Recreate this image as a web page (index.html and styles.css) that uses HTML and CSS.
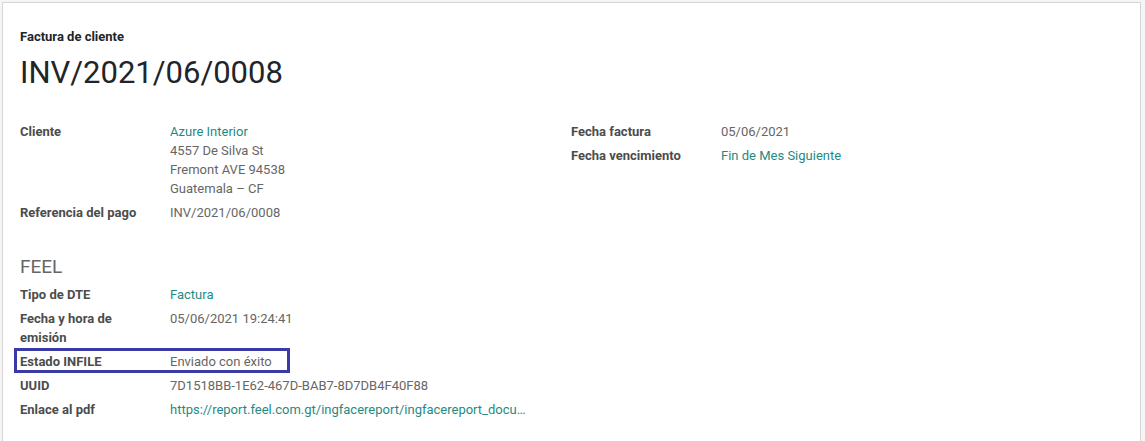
FILE: index.html
```html
<!DOCTYPE html>
<html lang="es">
<head>
<meta charset="utf-8">
<link rel="stylesheet" href="styles.css">
</head>
<body>
<div class="sheet">
  <div class="subtitle">Factura de cliente</div>
  <h1 class="title">INV/2021/06/0008</h1>
  <div class="groups">
    <div class="group">
      <div class="label">Cliente</div>
      <div class="value"><a class="link">Azure Interior</a><br>4557 De Silva St<br>Fremont AVE 94538<br>Guatemala – CF</div>
      <div class="label">Referencia del pago</div>
      <div class="value">INV/2021/06/0008</div>
    </div>
    <div class="group">
      <div class="label">Fecha factura</div>
      <div class="value">05/06/2021</div>
      <div class="label">Fecha vencimiento</div>
      <div class="value"><a class="link">Fin de Mes Siguiente</a></div>
    </div>
  </div>
  <h2 class="section">FEEL</h2>
  <div class="group">
    <div class="label">Tipo de DTE</div>
    <div class="value"><a class="link">Factura</a></div>
    <div class="label">Fecha y hora de emisión</div>
    <div class="value">05/06/2021 19:24:41</div>
    <div class="label highlight">Estado INFILE</div>
    <div class="value">Enviado con éxito</div>
    <div class="label">UUID</div>
    <div class="value">7D1518BB-1E62-467D-BAB7-8D7DB4F40F88</div>
    <div class="label">Enlace al pdf</div>
    <div class="value"><a class="link ellipsis">https://report.feel.com.gt/ingfacereport/ingfacereport_documento?uuid=7D1518BB-1E62-467D-BAB7-8D7DB4F40F88</a></div>
  </div>
</div>
</body>
</html>
```

FILE: styles.css
```css
html, body {
  margin: 0;
  padding: 0;
}
body {
  background: #f5f5f5;
  font-family: Roboto, "Liberation Sans", sans-serif;
  font-size: 13px;
  color: #666666;
  overflow: hidden;
}
.sheet {
  margin: 2px 0 0 2px;
  width: 1139px;
  height: 460px;
  background: #ffffff;
  border: 1px solid #d6d6d6;
  padding: 0 0 0 17px;
  box-sizing: border-box;
}
.subtitle {
  padding-top: 24px;
  font-weight: 700;
  color: #212529;
  line-height: 19px;
}
.title {
  margin: 7px 0 0;
  font-size: 31px;
  font-weight: 400;
  line-height: 40px;
  color: #212529;
}
.groups {
  display: flex;
  align-items: flex-start;
  margin-top: 29px;
}
.groups > .group {
  width: 551px;
}
.group {
  display: grid;
  grid-template-columns: 150px 1fr;
  align-content: start;
  row-gap: 5px;
  line-height: 19px;
}
.label {
  font-weight: 700;
  color: #4c4c4c;
  padding-right: 20px;
  position: relative;
}
.value {
  color: #666666;
}
.link {
  color: #1f8a84;
  text-decoration: none;
}
.ellipsis {
  display: block;
  width: 360px;
  white-space: nowrap;
  overflow: hidden;
  text-overflow: ellipsis;
}
.section {
  margin: 32px 0 5px;
  font-size: 19px;
  font-weight: 400;
  line-height: 26px;
  color: #666666;
}
.highlight::after {
  content: "";
  position: absolute;
  left: -6px;
  top: -4px;
  width: 276px;
  height: 25px;
  border: 3px solid #3a3aa6;
  box-sizing: border-box;
  pointer-events: none;
}
```
